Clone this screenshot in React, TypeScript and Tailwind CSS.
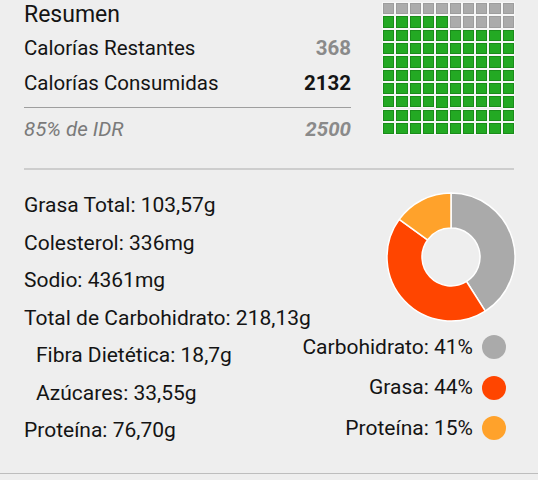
import React from "react"

const font = { fontFamily: "Roboto, 'Noto Sans', sans-serif" }

// 15 of 100 squares still free: top row plus right half of the second row
const cells = Array.from({ length: 100 }, (_, i) => !(i < 10 || (i >= 15 && i < 20)))

const macros = [
    { label: "Carbohidrato: 41%", pct: 41, color: "#aaaaaa" },
    { label: "Grasa: 44%", pct: 44, color: "#ff4500" },
    { label: "Proteína: 15%", pct: 15, color: "#ffa22b" },
]

const nutrients = [
    { text: "Grasa Total: 103,57g", sub: false },
    { text: "Colesterol: 336mg", sub: false },
    { text: "Sodio: 4361mg", sub: false },
    { text: "Total de Carbohidrato: 218,13g", sub: false },
    { text: "Fibra Dietética: 18,7g", sub: true },
    { text: "Azúcares: 33,55g", sub: true },
    { text: "Proteína: 76,70g", sub: false },
]

function arc(start: number, end: number, ro: number, ri: number, c: number) {
    const pt = (frac: number, r: number) => {
        const a = frac * Math.PI * 2 - Math.PI / 2
        return `${c + r * Math.cos(a)} ${c + r * Math.sin(a)}`
    }
    const large = end - start > 0.5 ? 1 : 0
    return `M ${pt(start, ro)} A ${ro} ${ro} 0 ${large} 1 ${pt(end, ro)} L ${pt(end, ri)} A ${ri} ${ri} 0 ${large} 0 ${pt(start, ri)} Z`
}

const Donut = () => {
    let acc = 0
    return (
        <svg width="130" height="130" viewBox="-1 -1 130 130">
            {macros.map((m) => {
                const start = acc / 100
                acc += m.pct
                const end = acc / 100
                return <path key={m.label} d={arc(start, end, 64, 29, 64)} fill={m.color} stroke="#ffffff" strokeWidth={1.5} strokeLinejoin="round" />
            })}
        </svg>
    )
}

export default function App() {
    return (
        <div className="w-[538px] h-[480px] bg-[#eeeeee] text-[#141414] overflow-hidden" style={font}>
            <div className="px-6">
                {/* resumen */}
                <div className="flex justify-between">
                    <div className="w-[327px]">
                        <div className="h-[30px] text-[23px] leading-[30px]">Resumen</div>
                        <div className="flex justify-between items-center h-[35px] mt-[1px] text-[20.5px]">
                            <span>Calorías Restantes</span>
                            <span className="font-bold text-[#8a8a8a]">368</span>
                        </div>
                        <div className="flex justify-between items-center h-[35px] text-[20.5px]">
                            <span>Calorías Consumidas</span>
                            <span className="font-bold">2132</span>
                        </div>
                        <div className="mt-[6px] border-t border-[#9e9e9e]" />
                        <div className="flex justify-between items-center h-[30px] mt-[6px] text-[20.5px] italic text-[#7a7a7a]">
                            <span>85% de IDR</span>
                            <span className="font-bold text-[#8a8a8a]">2500</span>
                        </div>
                    </div>
                    <div className="self-start mt-[3px] w-[131px] grid grid-cols-10 gap-[2px]">
                        {cells.map((green, i) => (
                            <div
                                key={i}
                                className={
                                    green
                                        ? "aspect-square bg-[#23a923] border border-[#1a8c1a] shadow-[0_0_0_1px_rgba(255,255,255,0.55)]"
                                        : "aspect-square bg-[#ababab] border border-[#9d9d9d] shadow-[0_0_0_1px_rgba(255,255,255,0.55)]"
                                }
                            />
                        ))}
                    </div>
                </div>
                <div className="mt-[24px] h-[2px] bg-[#cdcdcd]" />

                {/* nutrientes */}
                <div className="flex h-[303px]">
                    <div className="w-[260px] pt-[17px] text-[21px] whitespace-nowrap">
                        {nutrients.map((n) => (
                            <div key={n.text} className={n.sub ? "h-[37.5px] flex items-center pl-3" : "h-[37.5px] flex items-center"}>
                                {n.text}
                            </div>
                        ))}
                    </div>
                    <div className="flex-1 flex flex-col items-end">
                        <div className="mt-[22px] mr-[-2px]">
                            <Donut />
                        </div>
                        <div className="mt-[5px] pr-2">
                            {macros.map((m) => (
                                <div key={m.label} className="h-[40.5px] flex items-center justify-end gap-[9px] text-[21px]">
                                    <span>{m.label}</span>
                                    <span className="w-6 h-6 rounded-full" style={{ backgroundColor: m.color }} />
                                </div>
                            ))}
                        </div>
                    </div>
                </div>
            </div>
            <div className="border-t border-[#bdbdbd]" />
        </div>
    )
}
